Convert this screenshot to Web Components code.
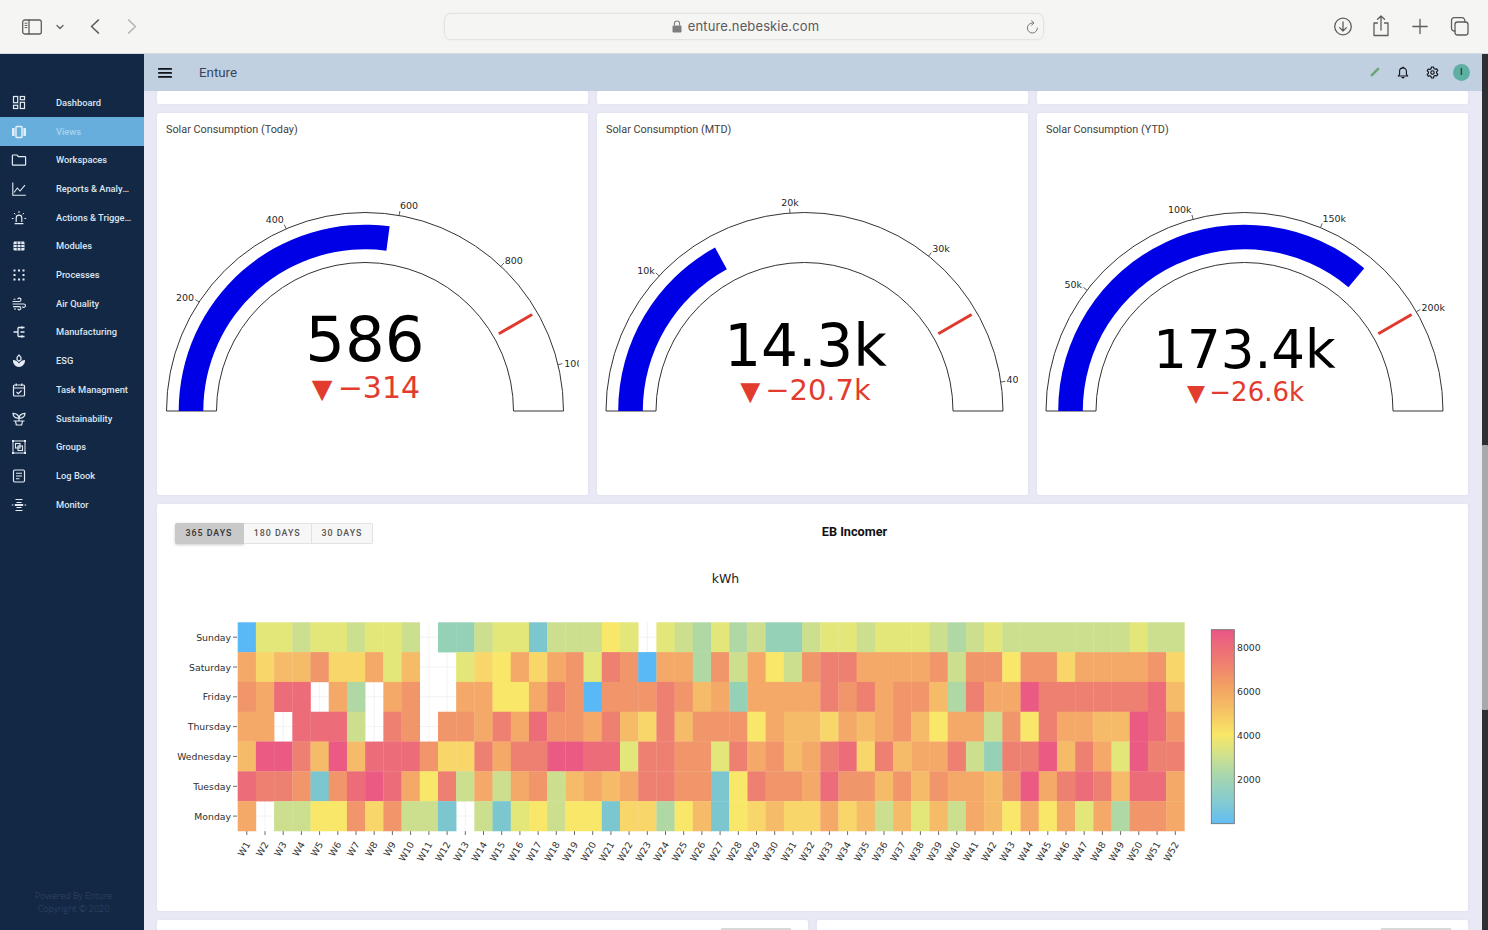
<!DOCTYPE html>
<html lang="en">
<head>
<meta charset="utf-8">
<title>Enture</title>
<style>
html,body{margin:0;height:100%;overflow:hidden;background:#e8e9f4}
</style>
</head>
<body>
<app-shell>
  <browser-bar slot="browser"></browser-bar>
  <side-nav slot="nav">
    <nav-item icon="dashboard">Dashboard</nav-item>
    <nav-item icon="views" active>Views</nav-item>
    <nav-item icon="folder">Workspaces</nav-item>
    <nav-item icon="chart">Reports &amp; Analytics</nav-item>
    <nav-item icon="siren" style="--w:76.5px">Actions &amp; Triggers</nav-item>
    <nav-item icon="grid">Modules</nav-item>
    <nav-item icon="dots">Processes</nav-item>
    <nav-item icon="wind">Air Quality</nav-item>
    <nav-item icon="tree">Manufacturing</nav-item>
    <nav-item icon="lotus">ESG</nav-item>
    <nav-item icon="task">Task Managment</nav-item>
    <nav-item icon="plant">Sustainability</nav-item>
    <nav-item icon="groups">Groups</nav-item>
    <nav-item icon="log">Log Book</nav-item>
    <nav-item icon="monitor">Monitor</nav-item>
  </side-nav>
  <top-bar slot="top"></top-bar>
  <dash-row cols="3" style="height:13px"><dash-card></dash-card><dash-card></dash-card><dash-card></dash-card></dash-row>
  <dash-row cols="3" style="height:382px">
    <gauge-card heading="Solar Consumption (Today)" cx="208" angle="97.6" value="586" vsize="62.5" vy="360.5" delta="−314" dsize="30" dy="398" vdx="0" clip="422"
      ticks='[[33.3,"200",28,298,"middle"],[66.6,"400",117.7,220,"middle"],[99.9,"600",252,205.7,"middle"],[133.2,"800",356.7,260.7,"middle"],[166.5,"1000",407.3,364,"start"]]'></gauge-card>
    <gauge-card heading="Solar Consumption (MTD)" cx="207.5" angle="61.3" value="14.3k" vsize="58" vy="366" delta="−20.7k" dsize="29" dy="400" vdx="1" clip="421"
      ticks='[[42.9,"10k",49,271,"middle"],[85.8,"20k",193,203,"middle"],[128.7,"30k",344,249,"middle"],[171.6,"40k",409.5,380,"start"]]'></gauge-card>
    <gauge-card heading="Solar Consumption (YTD)" cx="207.5" angle="130" value="173.4k" vsize="53" vy="368" delta="−26.6k" dsize="26" dy="400.5" vdx="0" clip="422"
      ticks='[[37.5,"50k",36.3,285,"middle"],[75,"100k",142.7,210,"middle"],[112.5,"150k",297.3,219,"middle"],[150,"200k",396.3,307.7,"middle"]]'></gauge-card>
  </dash-row>
  <heat-card></heat-card>
  <dash-row cols="2" style="height:40px"><dash-card stub></dash-card><dash-card stub></dash-card></dash-row>
</app-shell>

<script>
const def = (name, cls) => customElements.define(name, cls);
const shadow = (el, html) => { el.attachShadow({mode:'open'}).innerHTML = html; };

def('app-shell', class extends HTMLElement {
  constructor(){ super(); shadow(this, `<style>
    :host{display:grid;grid-template-columns:144px 1fr 6px;grid-template-rows:54px 37px 1fr;height:930px;width:1488px;overflow:hidden;background:#e8e9f4}
    .browser{grid-column:1/4;grid-row:1}
    .nav{grid-column:1;grid-row:2/4;display:flex;min-height:0}
    .top{grid-column:2;grid-row:2}
    .body{grid-column:2;grid-row:3;overflow:hidden;padding:0 14px 0 13px;display:flex;flex-direction:column;gap:9px;min-height:0}
    .scroll{grid-column:3;grid-row:2/4;background:#2e2f33;display:flex;flex-direction:column;padding-top:391px}
    .thumb{height:265px;background:#a8a9ad;border-radius:1px}
  </style>
  <div class="browser"><slot name="browser"></slot></div>
  <div class="nav"><slot name="nav"></slot></div>
  <div class="top"><slot name="top"></slot></div>
  <div class="body"><slot></slot></div>
  <div class="scroll"><div class="thumb"></div></div>`); }
});

def('browser-bar', class extends HTMLElement {
  constructor(){ super(); const s='fill="none" stroke="#5e5e5e" stroke-width="1.3" stroke-linecap="round" stroke-linejoin="round"';
  shadow(this, `<style>
    :host{display:flex;align-items:center;height:53px;background:#f5f5f4;border-bottom:1px solid #d5dbe1;box-sizing:content-box;position:relative;padding:0 0 0 22px}
    svg{display:block;flex:none}
    .url{position:absolute;left:444px;top:13px;width:600px;height:27px;box-sizing:border-box;border:1px solid #e4e4e3;border-radius:7px;background:#f5f5f4;box-shadow:0 0 2px #e8e8e8;display:flex;align-items:center;justify-content:center;gap:6px;font:13px/1 Inter,"Liberation Sans",sans-serif;color:#5a5a5a;letter-spacing:.12px;padding-left:3px}
    .reload{position:absolute;right:4px;top:6px}
    .right{position:absolute;left:1333px;top:14px;display:flex;gap:0}
  </style>
  <svg width="20" height="16" viewBox="0 0 20 16" ${s}><rect x=".7" y="1" width="18.6" height="14" rx="2"/><path d="M7 1v14"/><path d="M3 4.2h2M3 6.4h2M3 8.6h2" stroke-width="1"/></svg>
  <svg style="margin-left:14px" width="8" height="6" viewBox="0 0 8 6" fill="none" stroke="#666" stroke-width="1.4" stroke-linecap="round" stroke-linejoin="round"><path d="M1 1.5L4 4.5L7 1.5"/></svg>
  <svg style="margin-left:26px" width="10" height="15" viewBox="0 0 11 17" fill="none" stroke="#5a5a5a" stroke-width="1.6" stroke-linecap="round" stroke-linejoin="round"><path d="M9.5 1L1.5 8.5L9.5 16"/></svg>
  <svg style="margin-left:27px" width="10" height="15" viewBox="0 0 11 17" fill="none" stroke="#b4b4b4" stroke-width="1.6" stroke-linecap="round" stroke-linejoin="round"><path d="M1.5 1L9.5 8.5L1.5 16"/></svg>
  <div class="url">
    <svg width="10" height="13" viewBox="0 0 10 13"><rect x=".5" y="5.5" width="9" height="7" rx="1.2" fill="#7e7e7e"/><path d="M2.4 5.6V3.6a2.6 2.6 0 0 1 5.2 0v2" fill="none" stroke="#7e7e7e" stroke-width="1.1"/></svg>
    <span>enture.nebeskie.com</span>
    <svg class="reload" width="13" height="15" viewBox="0 0 13 15" fill="none" stroke="#767676" stroke-width="1" stroke-linecap="round" stroke-linejoin="round"><path d="M6.5 3A5 5 0 1 0 11.4 8"/><path d="M5.6 .8L8 3L5.6 5.2"/></svg>
  </div>
  <div class="right">
    <svg width="20" height="24" viewBox="0 0 20 24" ${s}><circle cx="10" cy="12.5" r="8.3"/><path d="M10 8v9M6.6 13.6L10 17l3.4-3.4"/></svg>
    <svg style="margin-left:19px" width="18" height="24" viewBox="0 0 18 24" ${s}><path d="M5.5 9H2v12.5h14V9h-3.5"/><path d="M9 16V2M5.5 5.300L9 2l3.5 3.300"/></svg>
    <svg style="margin-left:22px" width="16" height="24" viewBox="0 0 16 24" ${s}><path d="M8 5.500v14M.8 12.500h14.400"/></svg>
    <svg style="margin-left:22px" width="19" height="24" viewBox="0 0 19 24" ${s}><rect x="5" y="8" width="13" height="13" rx="2.5"/><path d="M5 17h-.5A2.8 2.8 0 0 1 1.5 14.2V6.5A2.8 2.8 0 0 1 4.3 3.7H12a2.8 2.8 0 0 1 2.8 3V8"/></svg>
  </div>`); }
});

def('side-nav', class extends HTMLElement {
  constructor(){ super(); shadow(this, `<style>
    :host{display:flex;flex-direction:column;width:144px;height:100%;background:#132845;box-sizing:border-box;padding-top:34.6px}
    .list{display:flex;flex-direction:column}
    footer{margin-top:auto;padding:0 0 15px 3px;text-align:center;font:300 9px/13px "Open Sans",sans-serif;color:#34496a;white-space:nowrap}
  </style><div class="list"><slot></slot></div><footer>Powered By Enture<br>Copyright © 2020</footer>`); }
});

const ICONS = {
  dashboard:`<g fill="none" stroke-width="1.2"><rect x="2.5" y="1.5" width="4.2" height="6.2"/><rect x="9.3" y="1.5" width="4.2" height="3.2"/><rect x="2.5" y="10.3" width="4.2" height="3.2"/><rect x="9.3" y="7.3" width="4.2" height="6.2"/></g>`,
  views:`<g stroke="none"><rect x="1" y="4" width="2.6" height="8" rx=".4"/><rect x="12.4" y="4" width="2.6" height="8" rx=".4"/></g><rect x="5" y="2.6" width="6" height="10.8" rx=".8" fill="none" stroke-width="1.5"/>`,
  folder:`<path d="M2 3h4l1.4 1.6H14a.6.6 0 0 1 .6.6v7.4a.6.6 0 0 1-.6.6H2a.6.6 0 0 1-.6-.6V3.6A.6.6 0 0 1 2 3z" fill="none" stroke-width="1.2"/>`,
  chart:`<path d="M1.8 1.5v12.7h13" fill="none" stroke-width="1.1"/><path d="M3 11.5L6.3 7l2.7 3L14 4.2" fill="none" stroke-width="1.1"/>`,
  siren:`<path d="M5.2 12V8a2.8 2.8 0 0 1 5.6 0v4M3.6 13.6h8.8" fill="none" stroke-width="1.2"/><path d="M8 1v2M3 3l1.3 1.4M13 3l-1.3 1.4M.8 8.5h1.8M13.4 8.5h1.8" fill="none" stroke-width="1"/>`,
  grid:`<rect x="2.500" y="3.500" width="11" height="9" rx="1.200" stroke="none"/><path d="M6.200 3.500v9M9.800 3.500v9M2.500 6.500h11M2.500 9.500h11" stroke="#132845" stroke-width=".8"/>`,
  dots:`<g stroke="none"><rect x="2.5" y="2.5" width="2" height="2"/><rect x="7" y="2.5" width="2" height="2"/><rect x="11.5" y="2.5" width="2" height="2"/><rect x="2.5" y="7" width="2" height="2"/><rect x="11.5" y="7" width="2" height="2"/><rect x="2.5" y="11.5" width="2" height="2"/><rect x="7" y="11.5" width="2" height="2"/><rect x="11.5" y="11.5" width="2" height="2"/></g>`,
  wind:`<path d="M1.5 5.5h6.8a1.7 1.7 0 1 0-1.6-2.3M1.5 8h11.3a1.7 1.7 0 1 1-1.5 2.5M2 10.6h6.3a1.6 1.6 0 1 1-1.5 2.2M2.5 3.2h2M3 13h2" fill="none" stroke-width="1.1"/>`,
  tree:`<path d="M2.500 8h4.500M7 3.500h6.500M7 12.500h6.500M7 3.500v9M9.500 8h4" fill="none" stroke-width="1.300"/><path d="M11 2v3M11 11v3" fill="none" stroke-width=".9"/>`,
  lotus:`<path d="M8 2c1.7 1.3 2.3 2.8 2 4.6L8 8.3 6 6.6C5.7 4.8 6.3 3.3 8 2z" fill="none" stroke-width="1.2"/><path d="M2 7c2.600 0 4.700 1.200 6 3.600C9.300 8.200 11.400 7 14 7c.3 3.500-1.800 6.400-6 7C3.800 13.400 1.700 10.500 2 7z" stroke="none"/>`,
  task:`<rect x="2.500" y="3" width="11" height="11" rx="1" fill="none" stroke-width="1.200"/><path d="M2.500 6h11M5.200 1.500V4M10.800 1.500V4" fill="none" stroke-width="1.200"/><path d="M5.500 10l1.800 1.700 3.300-3.200" fill="none" stroke-width="1.100"/>`,
  plant:`<path d="M8 10V7M8 7C7.700 4.300 5.500 2.500 2 2.300 2 5.500 4.300 7.500 8 7zM8 7c.3-2.700 2.500-4.500 6-4.700 0 3.200-2.300 5.200-6 4.700z" fill="none" stroke-width="1.200"/><path d="M2.500 10h11M4.500 10l.8 4h5.400l.8-4" fill="none" stroke-width="1.200"/>`,
  groups:`<rect x="2" y="2" width="12" height="12" fill="none" stroke-width="1"/><rect x="4.500" y="4.500" width="4.500" height="4.500" fill="none" stroke-width="1.100"/><rect x="7" y="7" width="4.500" height="4.500" fill="none" stroke-width="1.100"/><g stroke="none"><rect x="1" y="1" width="2" height="2"/><rect x="13" y="1" width="2" height="2"/><rect x="1" y="13" width="2" height="2"/><rect x="13" y="13" width="2" height="2"/></g>`,
  log:`<rect x="2.500" y="2" width="11" height="12" rx="1.200" fill="none" stroke-width="1.200"/><path d="M5 5.300h6M5 8h6M5 10.700h3.500" fill="none" stroke-width="1.100"/>`,
  monitor:`<path d="M4.500 2.500h7M4.500 13.500h7M5.500 5.500h5M5.500 10.500h5" fill="none" stroke-width="1.200"/><rect x="3.800" y="7" width="8.400" height="2" stroke="none"/><path d="M.800 8h1.600M13.600 8h1.600" fill="none" stroke-width="1.200"/>`
};

def('nav-item', class extends HTMLElement {
  constructor(){ super(); const on=this.hasAttribute('active'); const ic=ICONS[this.getAttribute('icon')]||'';
  shadow(this, `<style>
    :host{display:flex;align-items:center;height:28.7px;box-sizing:border-box;padding-left:11px;width:144px;background:${on?'#68aedc':'transparent'};font:500 9.3px/1 Roboto,sans-serif;color:${on?'#a9d3ee':'#dbe5f0'}}
    svg{width:16px;height:16px;flex:none;fill:${on?'#e4f0f9':'#e4ebf3'};stroke:${on?'#e4f0f9':'#e4ebf3'}}
    span{margin-left:29px;width:var(--w,75px);overflow:hidden;white-space:nowrap;text-overflow:ellipsis;display:block;line-height:14px}
  </style><svg viewBox="0 0 16 16">${ic}</svg><span><slot></slot></span>`); }
});

def('top-bar', class extends HTMLElement {
  constructor(){ super(); shadow(this, `<style>
    :host{display:flex;align-items:center;height:37px;background:#c1d0e1;padding:0 12px 0 14px;font:13.3px/1 Roboto,sans-serif;color:#34465e}
    svg{display:block;flex:none}
    .t{margin-left:27px}
    .r{margin-left:auto;display:flex;align-items:center}
    .a{width:17.4px;height:17.4px;border-radius:50%;background:#5fb0a4;color:#17303a;font:500 9px/17.4px Roboto,sans-serif;text-align:center;margin-left:14px}
  </style>
  <svg width="14" height="10" viewBox="0 0 14 10" fill="#10131a"><rect width="14" height="1.700" y=".1" rx=".4"/><rect width="14" height="1.700" y="4.100" rx=".4"/><rect width="14" height="1.700" y="8.100" rx=".4"/></svg>
  <span class="t">Enture</span>
  <div class="r">
    <svg width="12" height="12" viewBox="0 0 12 12"><path d="M1.500 10.500L2 8.200 8.400 1.800a.8.800 0 0 1 1.100 0l.7.700a.8.800 0 0 1 0 1.100L3.800 10z" fill="#69a676"/></svg>
    <svg style="margin-left:16.300px" width="12" height="13" viewBox="0 0 12 13" fill="none" stroke="#0a0d14" stroke-width="1.100" stroke-linejoin="round"><path d="M1.300 10h9.400L9.400 8.200V5.300a3.400 3.400 0 0 0-6.800 0v2.900z"/><path d="M5 11.600h2M6 1v1" stroke-linecap="round"/></svg>
    <svg style="margin-left:16.200px" width="13" height="13" viewBox="0 0 13 13" fill="none" stroke="#0a0d14" stroke-width="1.100"><circle cx="6.500" cy="6.500" r="1.700"/><path d="M5.400 1h2.200l.3 1.500 1.300.7 1.500-.5 1.100 1.900-1.200 1 0 1.500 1.200 1-1.100 1.900-1.500-.5-1.300.7L7.600 12H5.400l-.3-1.500-1.300-.7-1.500.5L1.200 8.400l1.200-1V5.900l-1.200-1 1.100-1.900 1.500.5 1.300-.7z" stroke-linejoin="round"/></svg>
    <div class="a">I</div>
  </div>`); }
});

def('dash-row', class extends HTMLElement {
  constructor(){ super(); const c=this.getAttribute('cols')||3; shadow(this, `<style>
    :host{display:grid;grid-template-columns:repeat(${c},1fr);gap:9px;flex:none}
    ::slotted(*){min-width:0}
  </style><slot></slot>`); }
});

def('dash-card', class extends HTMLElement {
  constructor(){ super(); const st=this.hasAttribute('stub'); shadow(this, `<style>
    :host{background:#fff;border-radius:2px;box-shadow:0 0 2px rgba(200,205,225,.5);display:flex;justify-content:flex-end;padding:8px 17px 0 0;box-sizing:border-box}
    i{display:${st?'block':'none'};width:70px;height:2px;background:#d9d9d9}
  </style><i></i>`); }
});

def('gauge-card', class extends HTMLElement {
  connectedCallback(){
    if(this.shadowRoot) return;
    const a=n=>this.getAttribute(n), cx=+a('cx'), cy=411, th=+a('angle'), ds=+a('dsize'), w=+a('clip');
    const P=(r,deg)=>{const t=deg*Math.PI/180;return [(cx-r*Math.cos(t)).toFixed(2),(cy-r*Math.sin(t)).toFixed(2)];};
    const sector=(R,r,deg)=>{const A=P(R,0),B=P(R,deg),C=P(r,deg),D=P(r,0);return `M${A}A${R} ${R} 0 0 1 ${B}L${C}A${r} ${r} 0 0 0 ${D}Z`;};
    const ticks=JSON.parse(a('ticks')).map(([d,l,x,y,anc])=>{
      const p=P(198.5,d),q=P(203,d);
      return `<path d="M${p}L${q}" stroke="#333" stroke-width=".8"/><text x="${x}" y="${y+3.4}" text-anchor="${anc}" font-size="9.500" fill="#1f1f1f">${l}</text>`;
    }).join('');
    const t1=P(154.5,150),t2=P(193,150);
    shadow(this,`<style>
      :host{display:block;background:#fff;border-radius:2px;box-shadow:0 0 2px rgba(200,205,225,.5);overflow:hidden}
      h3{margin:0;padding:10px 0 0 9px;height:24px;box-sizing:border-box;font:400 10.85px/13px Roboto,sans-serif;color:#3f3f3f}
      svg{display:block;width:${w}px;height:343px;margin-top:13px}
      text{font-family:"DejaVu Sans",Verdana,sans-serif}
    </style>
    <h3>${a('heading')}</h3>
    <svg viewBox="0 150 ${w} 343">
      <path d="${sector(198.5,148.5,180)}" fill="#fff" stroke="#333" stroke-width="1"/>
      <path d="${sector(186.3,161.700,th)}" fill="#0000e6"/>
      <path d="M${t1}L${t2}" stroke="#e0392d" stroke-width="3"/>
      ${ticks}
      <text x="${cx+1+ +a('vdx')-1}" y="${a('vy')}" text-anchor="middle" font-size="${a('vsize')}" fill="#000">${a('value')}</text>
      <text x="${cx+1}" y="${a('dy')}" text-anchor="middle" font-size="${ds}" fill="#e23c2e"><tspan font-size="${(ds*.9).toFixed(1)}">▼</tspan><tspan dx="${(ds*.17).toFixed(1)}">${a('delta')}</tspan></text>
    </svg>`);
  }
});

const HEAT = [
 "0554554554_2245514"+"4465_543534224554"+"55543454444444544",
 "9788a77958__576979"+"a5ba0993a4964abb9"+"999a4aa6aa79999a7",
 "a9cc_93_9a__99669b"+"a0aaaba8929999bab"+"9aa83b99dbbbbbbc8",
 "99_ccc4_ba_aa9b9ca"+"a9b87b8aaa6988798"+"9a86994a6b9988dca",
 "8ddb8d8ccca77b9bbd"+"dcc5bbaa5b9a89bc7"+"b899b42bbd8b95dbb",
 "cbba1acdc96b4949a4"+"8989bbaa16baa9caa"+"8a8a998ad9bcb8cc9",
 "9_4466a7a441_41564"+"66177368167877978"+"48584986969593aa9"
];
const PAL = {0:'#58b9f6',1:'#7cc6cf',2:'#94d1b6',3:'#b0d8a4',4:'#cbdf8e',5:'#e3e678',6:'#f8e769',7:'#f8d669',8:'#f5bb69',9:'#f4a968',a:'#f1966a',b:'#ee8071',c:'#ec6c79',d:'#ea5a82'};
const DAYS=['Sunday','Saturday','Friday','Thursday','Wednesday','Tuesday','Monday'];

def('heat-card', class extends HTMLElement {
  constructor(){ super();
    const X=237.7, Y=622.3, W=18.205, H=29.81;
    let grid='',cells='',ticks='';
    for(let c=0;c<52;c++){const x=X+W*(c+.5);grid+=`<path d="M${x.toFixed(1)} ${Y}V${Y+7*H}" stroke="#eee" stroke-width=".7"/>`;}
    for(let r=0;r<7;r++){const y=Y+H*(r+.5);grid+=`<path d="M${X} ${y.toFixed(1)}H${X+52*W}" stroke="#eee" stroke-width=".7"/>`;}
    HEAT.forEach((row,r)=>{[...row].forEach((ch,c)=>{ if(ch==='_')return;
      cells+=`<rect x="${(X+W*c).toFixed(2)}" y="${(Y+H*r).toFixed(2)}" width="${(W+.3).toFixed(2)}" height="${(H+.3).toFixed(2)}" fill="${PAL[ch]}"/>`;});});
    DAYS.forEach((d,r)=>{const y=Y+H*(r+.5);ticks+=`<path d="M233 ${y.toFixed(1)}H237" stroke="#444" stroke-width=".8"/><text x="231" y="${(y+3.6).toFixed(1)}" text-anchor="end">${d}</text>`;});
    for(let c=0;c<52;c++){const x=X+W*(c+.5);ticks+=`<path d="M${x.toFixed(1)} 831.200V835" stroke="#444" stroke-width=".8"/><text transform="translate(${(x+1).toFixed(1)} 842.500) rotate(-60)" text-anchor="end" y="3.300">W${c+1}</text>`;}
    const labs=[[8000,647.5],[6000,691.5],[4000,735.7],[2000,780]].map(([v,y])=>`<text x="1237" y="${y+3.3}">${v}</text>`).join('');
    shadow(this,`<style>
      :host{display:block;flex:none;height:407px;background:#fff;border-radius:2px;box-shadow:0 0 2px rgba(200,205,225,.5);overflow:hidden}
      header{display:grid;grid-template-columns:1fr;height:50px;box-sizing:border-box;padding:19px 18px 0}
      .btns{display:flex;grid-area:1/1;width:max-content;height:21px}
      .btn{font:500 8.900px/19px Roboto,sans-serif;letter-spacing:.95px;color:#555;background:#f7f7f7;border:1px solid #e2e2e2;border-left:none;padding:0 10px;white-space:nowrap}
      .btn.on{background:#c9c9c9;color:#333;border-color:#c9c9c9;box-shadow:0 1px 3px rgba(0,0,0,.2);padding:0 10.500px;border-radius:2px 0 0 2px}
      .btn:last-child{border-radius:0 2px 2px 0}
      h2{grid-area:1/1;margin:0;text-align:center;font:700 12.700px/17px Roboto,sans-serif;color:#111;padding-left:84px;height:17px}
      svg{display:block;width:1311px;height:357px}
      text{font-family:"DejaVu Sans",Verdana,sans-serif;font-size:9.300px;fill:#2e2e2e}
      .kwh{font-size:12.500px;fill:#222}
      .cells{filter:blur(.45px)}
    </style>
    <header>
      <div class="btns"><span class="btn on">365 DAYS</span><span class="btn">180 DAYS</span><span class="btn">30 DAYS</span></div>
      <h2>EB Incomer</h2>
    </header>
    <svg viewBox="157 554 1311 357">
      <defs><linearGradient id="cb" x1="0" y1="1" x2="0" y2="0">
        <stop offset="0" stop-color="#62bdf3"/><stop offset=".12" stop-color="#86cbcf"/><stop offset=".25" stop-color="#a8d6ae"/><stop offset=".36" stop-color="#d2e28a"/><stop offset=".46" stop-color="#f8e766"/><stop offset=".58" stop-color="#f6c265"/><stop offset=".7" stop-color="#f3a363"/><stop offset=".83" stop-color="#ef7f6f"/><stop offset="1" stop-color="#ea5685"/>
      </linearGradient></defs>
      <text class="kwh" x="725.500" y="583" text-anchor="middle">kWh</text>
      ${grid}<g class="cells">${cells}</g>${ticks}
      <rect x="1211.300" y="629.700" width="23" height="194" fill="url(#cb)" stroke="#6b6b6b" stroke-width=".8"/>
      ${labs}
    </svg>`);
  }
});
</script>
</body>
</html>
